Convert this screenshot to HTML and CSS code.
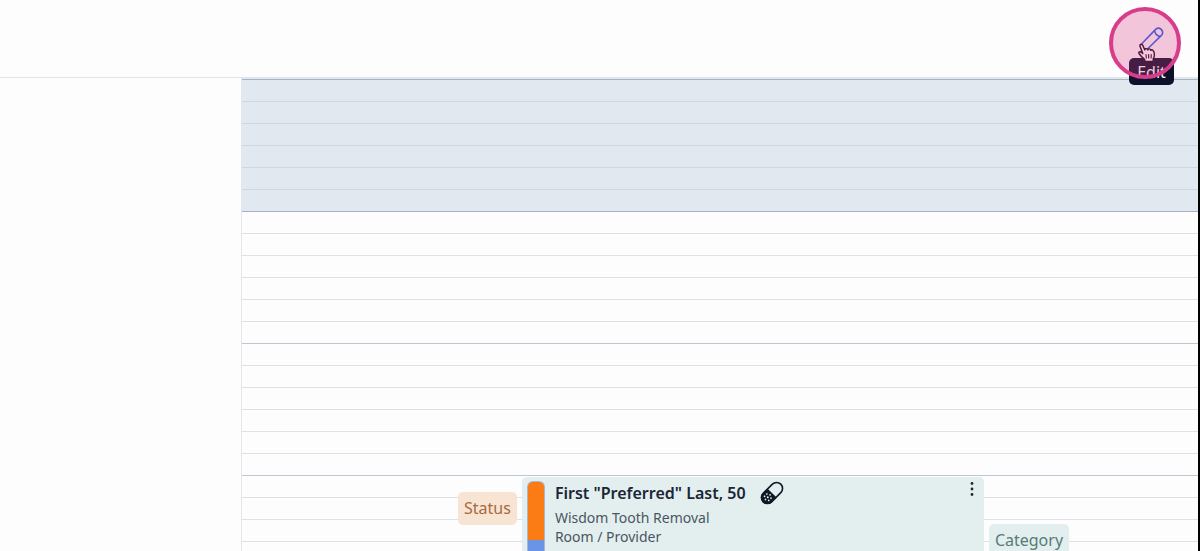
FILE: index.html
```
<!DOCTYPE html>
<html lang="en">
<head>
    <meta charset="UTF-8">
    <meta name="viewport" content="width=device-width, initial-scale=1.0">
    <title>Schedule</title>
    <link rel="stylesheet" href="styles.css">
</head>
<body>
    <header class="topbar">
        <button type="button" class="edit-button" aria-label="Edit">
            <svg width="24" height="24" viewBox="0 0 24 24" fill="none" stroke="#5a58cc" stroke-width="1.6" stroke-linejoin="round">
                <path d="M1.5 22 L2.2 16.3 L15.6 2.4 Q18.4 0 21.2 2.4 Q24 5.4 21.4 8.4 L8 21.5 Z"/>
                <path d="M14.6 3.6 Q15.4 8.6 20.2 9.5"/>
            </svg>
        </button>
        <span class="tooltip">Edit</span>
        <span class="click-marker"></span>
        <svg class="cursor" width="20" height="20" viewBox="0 0 20 20" fill="#f8c8de" stroke="#4a1838" stroke-width="1.4" stroke-linejoin="round" stroke-linecap="round">
            <path d="M8 18.5 L7.5 16.2 Q4 13.5 2 10.5 Q1.3 8.8 3.2 8.8 Q4.5 9 5.8 10.5 L3 3.3 Q2.6 1.5 4 1.2 Q5.2 1 5.8 2.4 L7.8 7 Q8 5.4 9.4 5.6 Q10.6 5.8 10.8 7 Q11.3 5.6 12.6 5.9 Q13.6 6.2 13.8 7.4 Q14.8 6.4 15.9 7.2 Q17.5 8.8 17.4 12 Q17.3 14 16.2 15.8 L16.2 18.5 Z"/>
            <path d="M9 11.5 L9.3 15 M11.6 11.5 L11.7 15 M14.2 11.5 L14.1 15" stroke-width="1.1"/>
        </svg>
    </header>

    <main class="schedule">
        <aside class="sidebar"></aside>
        <section class="grid">
            <div class="hour closed">
                <div class="slot"></div><div class="slot"></div><div class="slot"></div>
                <div class="slot"></div><div class="slot"></div><div class="slot"></div>
            </div>
            <div class="hour">
                <div class="slot"></div><div class="slot"></div><div class="slot"></div>
                <div class="slot"></div><div class="slot"></div><div class="slot"></div>
            </div>
            <div class="hour">
                <div class="slot"></div><div class="slot"></div><div class="slot"></div>
                <div class="slot"></div><div class="slot"></div><div class="slot"></div>
            </div>
            <div class="hour">
                <div class="slot"></div><div class="slot"></div><div class="slot"></div>
                <div class="slot"></div>
            </div>

            <div class="appointment">
                <span class="tag status">Status</span>
                <article class="card">
                    <div class="color-bar"></div>
                    <div class="details">
                        <h2>First "Preferred" Last, 50
                            <svg width="26" height="26" viewBox="0 0 24 24">
                                <g transform="rotate(-45 12 12)">
                                    <rect x="0.5" y="6.5" width="23" height="11" rx="5.5" fill="none" stroke="#111827" stroke-width="1.5"/>
                                    <path d="M12 6 H6 A6 6 0 0 0 6 18 H12 Z" fill="#111827"/>
                                    <g fill="#e3efee">
                                        <circle cx="6.5" cy="12" r="0.9"/>
                                        <circle cx="3.5" cy="12" r="0.8"/>
                                        <circle cx="9.5" cy="12" r="0.8"/>
                                        <circle cx="5" cy="9.3" r="0.8"/>
                                        <circle cx="8" cy="9.3" r="0.8"/>
                                        <circle cx="5" cy="14.7" r="0.8"/>
                                        <circle cx="8" cy="14.7" r="0.8"/>
                                    </g>
                                </g>
                            </svg>
                        </h2>
                        <p>Wisdom Tooth Removal</p>
                        <p>Room / Provider</p>
                    </div>
                    <button type="button" class="menu-button" aria-label="More options">
                        <svg width="4" height="16" viewBox="0 0 4 16" fill="#1f2937">
                            <circle cx="2" cy="2.5" r="1.4"/>
                            <circle cx="2" cy="8" r="1.4"/>
                            <circle cx="2" cy="13.5" r="1.4"/>
                        </svg>
                    </button>
                </article>
                <span class="tag category">Category</span>
            </div>
        </section>
    </main>
</body>
</html>
```
FILE: styles.css
```
* {
    box-sizing: border-box;
}
body {
    display: flex;
    flex-direction: column;
    height: 100vh;
    margin: 0;
    overflow: hidden;
    border-right: 2px solid #000;
    background-color: #fdfdfd;
    color: #1c2536;
    font-family: "Noto Sans", "Open Sans", sans-serif;
    font-size: 16px;
}
button {
    padding: 0;
    border: none;
    background: none;
}
svg {
    display: block;
}

/* Top bar */
.topbar {
    position: relative;
    z-index: 2;
    display: flex;
    flex-shrink: 0;
    align-items: center;
    justify-content: flex-end;
    height: 78px;
    padding-right: 34px;
    border-bottom: 1px solid #e1e4ea;
}
.edit-button {
    z-index: 1;
    width: 24px;
    height: 24px;
}
.tooltip {
    position: absolute;
    top: 58px;
    right: 24px;
    width: 45px;
    height: 27px;
    border-radius: 5px;
    background-color: #0b1229;
    color: #fff;
    line-height: 29px;
    text-align: center;
}
.click-marker {
    position: absolute;
    top: 7px;
    right: 17px;
    width: 72px;
    height: 72px;
    border: 4px solid #d83d8b;
    border-radius: 50%;
    background-color: rgba(216, 61, 139, 0.29);
}
.cursor {
    position: absolute;
    z-index: 1;
    top: 43px;
    right: 41px;
}

/* Schedule */
.schedule {
    display: flex;
    flex: 1;
    min-height: 0;
    overflow: hidden;
}
.sidebar {
    width: 241px;
    flex-shrink: 0;
}
.grid {
    position: relative;
    flex: 1;
    overflow: hidden;
    padding-top: 1px;
    border-left: 1px solid #e3e6ee;
}
.slot {
    height: 22px;
    border-top: 1px solid #dde2e8;
}
.slot:first-child {
    border-top-color: #c0c5d4;
}
.closed {
    margin-top: -1px;
    padding-top: 1px;
    background-color: #e2e8ef;
}
.closed .slot {
    border-top-color: #d0d7e1;
}
.closed .slot:first-child,
.closed + .hour .slot:first-child {
    border-top-color: #a7b4c6;
}

/* Appointment */
.appointment {
    position: absolute;
    top: 399px;
    bottom: 0;
    left: 216px;
    display: flex;
    align-items: flex-start;
    gap: 5px;
}
.tag {
    height: 33px;
    padding: 0 6px;
    border-radius: 5px;
    line-height: 33px;
}
.status {
    margin-top: 15px;
    background-color: #f8e4d2;
    color: #a8693f;
}
.category {
    margin-top: 47px;
    background-color: #e3efee;
    color: #567b78;
}
.card {
    display: flex;
    align-self: stretch;
    width: 462px;
    padding: 4px 5px 0;
    border-radius: 5px 5px 0 0;
    background-color: #e3efee;
}
.color-bar {
    width: 18px;
    border: 1px solid #a9b7cf;
    border-bottom: none;
    border-radius: 6px 6px 0 0;
    background: linear-gradient(#fb7c14 58px, #6a94e8 58px);
}
.details {
    flex: 1;
    padding-left: 10px;
}
h2 {
    display: flex;
    align-items: center;
    gap: 13px;
    height: 24px;
    margin: 0 0 3px;
    font-size: 16px;
    font-weight: 600;
}
p {
    margin: 0;
    color: #4b5563;
    font-size: 14px;
    line-height: 19px;
}
.menu-button {
    width: 14px;
    height: 14px;
}
.menu-button svg {
    margin: 0 auto;
}
```
